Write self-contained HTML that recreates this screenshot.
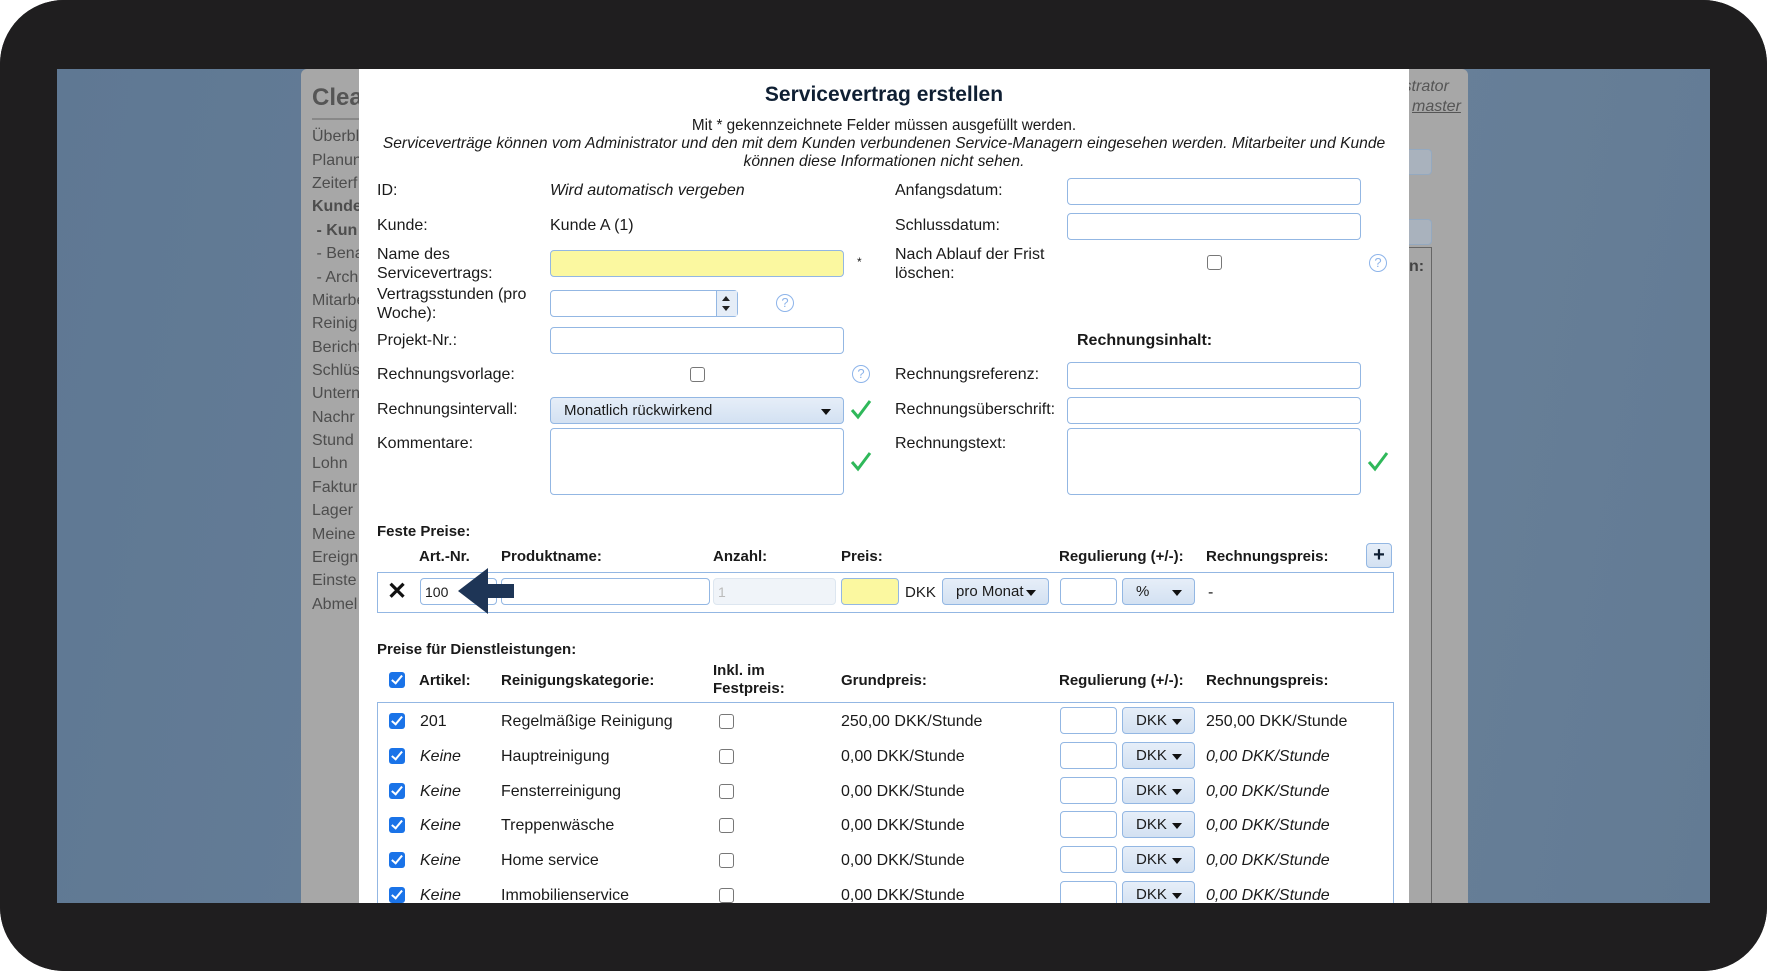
<!DOCTYPE html>
<html><head><meta charset="utf-8"><style>
*{box-sizing:border-box;margin:0;padding:0}
body{width:1767px;height:971px;background:#fff;position:relative;overflow:hidden;font-family:"Liberation Sans",Arial,sans-serif;color:#1a1a1a}
.frame{position:absolute;left:0;top:0;width:1767px;height:971px;border-radius:64px;background:#1f1e1f}
.bg{position:absolute;left:57px;top:69px;width:1653px;height:834px;background:linear-gradient(100deg,#5f7893 0%,#6a829b 60%,#637b94 100%);overflow:hidden}
.gray{position:absolute;left:301px;top:69px;width:1167px;height:834px;background:#a7a7a7;border-radius:6px 6px 0 0}
.side{position:absolute;left:312px;font-size:16px;color:#4d4d4d;white-space:nowrap}
.modal{position:absolute;left:359px;top:69px;width:1050px;height:834px;background:#fff;overflow:hidden}
.a{position:absolute;white-space:nowrap;font-size:16px}
.in{position:absolute;border:1px solid #93b7e3;border-radius:4px;background:#fff;height:27px}
.y{background:#fbf8a0}
.sel{position:absolute;border:1px solid #93b7e3;border-radius:4px;background:linear-gradient(#e6eef8,#d3e1f2);height:27px;font-size:15px;padding:4px 0 0 13px;white-space:nowrap}
.sel:after{content:"";position:absolute;right:12px;top:11px;border-left:5px solid transparent;border-right:5px solid transparent;border-top:6px solid #111}
.cb{position:absolute;width:15px;height:15px;border:1.5px solid #777;border-radius:3px;background:#fff}
.cbc{position:absolute;width:16px;height:16px;border-radius:3px;background:#1a73e8}
.cbc:after{content:"";position:absolute;left:5px;top:1px;width:4px;height:9px;border:solid #fff;border-width:0 2.5px 2.5px 0;transform:rotate(40deg)}
.q{position:absolute;width:18px;height:18px;border:1.5px solid #8db4ea;border-radius:50%;color:#8db4ea;font-size:13px;text-align:center;line-height:15px}
.ck{position:absolute;width:22px;height:22px}
.b{font-weight:bold}
.i{font-style:italic}
.t{position:absolute;left:0;top:1px}
</style></head><body>
<div class="frame"></div>
<div class="bg"></div>
<div class="gray"></div>
<div class="side" style="top:84px;font-size:24px;font-weight:bold;color:#555">Clea</div>
<div style="position:absolute;left:312px;top:118px;width:50px;border-top:2px solid #888"></div>
<div class="side" style="top:128px">Überbl</div>
<div class="side" style="top:152px">Planun</div>
<div class="side" style="top:175px">Zeiterf</div>
<div class="side b" style="top:198px">Kunde</div>
<div class="side b" style="top:222px">&nbsp;- Kun</div>
<div class="side" style="top:245px">&nbsp;- Bena</div>
<div class="side" style="top:269px">&nbsp;- Archi</div>
<div class="side" style="top:292px">Mitarbe</div>
<div class="side" style="top:315px">Reinig</div>
<div class="side" style="top:339px">Bericht</div>
<div class="side" style="top:362px">Schlüs</div>
<div class="side" style="top:385px">Untern</div>
<div class="side" style="top:409px">Nachr</div>
<div class="side" style="top:432px">Stund</div>
<div class="side" style="top:455px">Lohn</div>
<div class="side" style="top:479px">Faktur</div>
<div class="side" style="top:502px">Lager</div>
<div class="side" style="top:526px">Meine</div>
<div class="side" style="top:549px">Ereign</div>
<div class="side" style="top:572px">Einste</div>
<div class="side" style="top:596px">Abmel</div>
<div class="side i" style="left:1400px;top:78px;color:#555">istrator</div>
<div class="side i" style="left:1412px;top:98px;color:#555;text-decoration:underline">master</div>
<div style="position:absolute;left:1400px;top:149px;width:32px;height:26px;border:1px solid #94a9c0;border-radius:4px;background:#a9b2bd"></div>
<div style="position:absolute;left:1400px;top:219px;width:32px;height:26px;border:1px solid #94a9c0;border-radius:4px;background:#a9b2bd"></div>
<div style="position:absolute;left:1405px;top:247px;width:27px;height:656px;border:1px solid #666;border-left:none;border-bottom:none"></div>
<div class="side b" style="left:1409px;top:258px;color:#444">n:</div>

<div class="modal"></div>

<div class="a b" style="left:359px;width:1050px;text-align:center;top:83px;font-size:21px;color:#0f1f33">Servicevertrag erstellen</div>
<div class="a" style="left:359px;width:1050px;text-align:center;top:117px;font-size:15.3px">Mit * gekennzeichnete Felder müssen ausgefüllt werden.</div>
<div class="a i" style="left:359px;width:1050px;text-align:center;top:135px;font-size:15.6px;white-space:normal;line-height:18px;padding:0 6px">Serviceverträge können vom Administrator und den mit dem Kunden verbundenen Service-Managern eingesehen werden. Mitarbeiter und Kunde können diese Informationen nicht sehen.</div>

<div class="t">
<div class="a" style="left:377px;top:181px">ID:</div>
<div class="a i" style="left:550px;top:181px">Wird automatisch vergeben</div>
<div class="a" style="left:377px;top:216px">Kunde:</div>
<div class="a" style="left:550px;top:216px">Kunde A (1)</div>
<div class="a" style="left:377px;top:244px;line-height:19px">Name des<br>Servicevertrags:</div>
<div class="a" style="left:857px;top:254px;font-size:12px">*</div>
<div class="a" style="left:377px;top:284px;line-height:19px">Vertragsstunden (pro<br>Woche):</div>
<div class="a" style="left:377px;top:331px">Projekt-Nr.:</div>
<div class="a" style="left:377px;top:365px">Rechnungsvorlage:</div>
<div class="a" style="left:377px;top:400px">Rechnungsintervall:</div>
<div class="a" style="left:377px;top:434px">Kommentare:</div>
<div class="a" style="left:895px;top:181px">Anfangsdatum:</div>
<div class="a" style="left:895px;top:216px">Schlussdatum:</div>
<div class="a" style="left:895px;top:244px;line-height:19px">Nach Ablauf der Frist<br>löschen:</div>
<div class="a b" style="left:1077px;top:331px">Rechnungsinhalt:</div>
<div class="a" style="left:895px;top:365px">Rechnungsreferenz:</div>
<div class="a" style="left:895px;top:400px">Rechnungsüberschrift:</div>
<div class="a" style="left:895px;top:434px">Rechnungstext:</div>
<div class="a b" style="left:377px;top:522px;font-size:15px">Feste Preise:</div>
<div class="a b" style="left:419px;top:547px;font-size:15px">Art.-Nr.</div>
<div class="a b" style="left:501px;top:547px;font-size:15px">Produktname:</div>
<div class="a b" style="left:713px;top:547px;font-size:15px">Anzahl:</div>
<div class="a b" style="left:841px;top:547px;font-size:15px">Preis:</div>
<div class="a b" style="left:1059px;top:547px;font-size:15px">Regulierung (+/-):</div>
<div class="a b" style="left:1206px;top:547px;font-size:15px">Rechnungspreis:</div>
<div class="a b" style="left:377px;top:640px;font-size:15px">Preise für Dienstleistungen:</div>
<div class="a b" style="left:419px;top:671px;font-size:15px">Artikel:</div>
<div class="a b" style="left:501px;top:671px;font-size:15px">Reinigungskategorie:</div>
<div class="a b" style="left:713px;top:661px;font-size:15px;line-height:18px">Inkl. im<br>Festpreis:</div>
<div class="a b" style="left:841px;top:671px;font-size:15px">Grundpreis:</div>
<div class="a b" style="left:1059px;top:671px;font-size:15px">Regulierung (+/-):</div>
<div class="a b" style="left:1206px;top:671px;font-size:15px">Rechnungspreis:</div>
</div>

<div class="in y" style="left:550px;top:250px;width:294px"></div>
<div class="in" style="left:550px;top:290px;width:188px"></div>
<div style="position:absolute;left:716px;top:291px;width:21px;height:25px;border-left:1px solid #93b7e3;background:#e5edf7"></div>
<div style="position:absolute;left:722px;top:296px;border-left:4px solid transparent;border-right:4px solid transparent;border-bottom:5px solid #222"></div>
<div style="position:absolute;left:722px;top:306px;border-left:4px solid transparent;border-right:4px solid transparent;border-top:5px solid #222"></div>
<div class="q" style="left:776px;top:294px">?</div>
<div class="in" style="left:550px;top:327px;width:294px"></div>
<div class="cb" style="left:690px;top:367px"></div>
<div class="q" style="left:852px;top:365px">?</div>
<div class="sel" style="left:550px;top:397px;width:294px">Monatlich rückwirkend</div>
<div class="in" style="left:550px;top:428px;width:294px;height:67px"></div>
<div class="in" style="left:1067px;top:178px;width:294px"></div>
<div class="in" style="left:1067px;top:213px;width:294px"></div>
<div class="cb" style="left:1207px;top:255px"></div>
<div class="q" style="left:1369px;top:254px">?</div>
<div class="in" style="left:1067px;top:362px;width:294px"></div>
<div class="in" style="left:1067px;top:397px;width:294px"></div>
<div class="in" style="left:1067px;top:428px;width:294px;height:67px"></div>

<svg class="ck" style="left:850px;top:398px" viewBox="0 0 22 22"><path d="M2 12 L8 19 L20 3" fill="none" stroke="#2fb85a" stroke-width="3"/></svg>
<svg class="ck" style="left:850px;top:450px" viewBox="0 0 22 22"><path d="M2 12 L8 19 L20 3" fill="none" stroke="#2fb85a" stroke-width="3"/></svg>
<svg class="ck" style="left:1367px;top:450px" viewBox="0 0 22 22"><path d="M2 12 L8 19 L20 3" fill="none" stroke="#2fb85a" stroke-width="3"/></svg>

<div style="position:absolute;left:1366px;top:543px;width:26px;height:25px;border:1px solid #93b7e3;border-radius:4px;background:linear-gradient(#e6eef8,#d3e1f2);font-size:20px;font-weight:bold;text-align:center;line-height:22px;color:#0f1f33">+</div>
<div style="position:absolute;left:377px;top:572px;width:1017px;height:41px;border:1px solid #93b7e3"></div>
<div class="a b" style="left:387px;top:577px;font-size:24px;color:#111">✕</div>
<div class="in" style="left:420px;top:578px;width:77px;font-size:14px;padding:5px 4px">100</div>
<div class="in" style="left:501px;top:578px;width:209px"></div>
<div class="in" style="left:713px;top:578px;width:123px;background:#f0f4f9;border-color:#dde6f0;font-size:14px;color:#bbb;padding:5px 4px">1</div>
<div class="in y" style="left:841px;top:578px;width:58px"></div>
<div class="a" style="left:905px;top:584px;font-size:15px">DKK</div>
<div class="sel" style="left:942px;top:578px;width:107px">pro Monat</div>
<div class="in" style="left:1060px;top:578px;width:57px"></div>
<div class="sel" style="left:1122px;top:578px;width:73px">%</div>
<div class="a" style="left:1208px;top:584px">-</div>
<svg style="position:absolute;left:455px;top:566px" width="62" height="50" viewBox="0 0 62 50"><path d="M3 25 L33 2 L33 18 L59 18 L59 32 L33 32 L33 48 Z" fill="#1e3556"/></svg>

<div class="cbc" style="left:389px;top:672px"></div>
<div style="position:absolute;left:377px;top:702px;width:1017px;height:260px;border:1px solid #93b7e3"></div>

<div style="position:absolute;left:0;top:712px">
<div class="cbc" style="left:389px;top:1px"></div><div class="a" style="left:420px;top:1px">201</div><div class="a" style="left:501px;top:1px">Regelmäßige Reinigung</div><div class="cb" style="left:719px;top:2px"></div><div class="a" style="left:841px;top:1px">250,00 DKK/Stunde</div><div class="in" style="left:1060px;top:-5px;width:57px"></div><div class="sel" style="left:1122px;top:-5px;width:73px">DKK</div><div class="a" style="left:1206px;top:1px">250,00 DKK/Stunde</div>
</div>
<div style="position:absolute;left:0;top:747px">
<div class="cbc" style="left:389px;top:1px"></div><div class="a i" style="left:420px;top:1px">Keine</div><div class="a" style="left:501px;top:1px">Hauptreinigung</div><div class="cb" style="left:719px;top:2px"></div><div class="a" style="left:841px;top:1px">0,00 DKK/Stunde</div><div class="in" style="left:1060px;top:-5px;width:57px"></div><div class="sel" style="left:1122px;top:-5px;width:73px">DKK</div><div class="a i" style="left:1206px;top:1px">0,00 DKK/Stunde</div>
</div>
<div style="position:absolute;left:0;top:782px">
<div class="cbc" style="left:389px;top:1px"></div><div class="a i" style="left:420px;top:1px">Keine</div><div class="a" style="left:501px;top:1px">Fensterreinigung</div><div class="cb" style="left:719px;top:2px"></div><div class="a" style="left:841px;top:1px">0,00 DKK/Stunde</div><div class="in" style="left:1060px;top:-5px;width:57px"></div><div class="sel" style="left:1122px;top:-5px;width:73px">DKK</div><div class="a i" style="left:1206px;top:1px">0,00 DKK/Stunde</div>
</div>
<div style="position:absolute;left:0;top:816px">
<div class="cbc" style="left:389px;top:1px"></div><div class="a i" style="left:420px;top:1px">Keine</div><div class="a" style="left:501px;top:1px">Treppenwäsche</div><div class="cb" style="left:719px;top:2px"></div><div class="a" style="left:841px;top:1px">0,00 DKK/Stunde</div><div class="in" style="left:1060px;top:-5px;width:57px"></div><div class="sel" style="left:1122px;top:-5px;width:73px">DKK</div><div class="a i" style="left:1206px;top:1px">0,00 DKK/Stunde</div>
</div>
<div style="position:absolute;left:0;top:851px">
<div class="cbc" style="left:389px;top:1px"></div><div class="a i" style="left:420px;top:1px">Keine</div><div class="a" style="left:501px;top:1px">Home service</div><div class="cb" style="left:719px;top:2px"></div><div class="a" style="left:841px;top:1px">0,00 DKK/Stunde</div><div class="in" style="left:1060px;top:-5px;width:57px"></div><div class="sel" style="left:1122px;top:-5px;width:73px">DKK</div><div class="a i" style="left:1206px;top:1px">0,00 DKK/Stunde</div>
</div>
<div style="position:absolute;left:0;top:886px">
<div class="cbc" style="left:389px;top:1px"></div><div class="a i" style="left:420px;top:1px">Keine</div><div class="a" style="left:501px;top:1px">Immobilienservice</div><div class="cb" style="left:719px;top:2px"></div><div class="a" style="left:841px;top:1px">0,00 DKK/Stunde</div><div class="in" style="left:1060px;top:-5px;width:57px"></div><div class="sel" style="left:1122px;top:-5px;width:73px">DKK</div><div class="a i" style="left:1206px;top:1px">0,00 DKK/Stunde</div>
</div>
<div style="position:absolute;left:0;top:903px;width:1767px;height:68px;background:#1f1e1f;border-radius:0 0 64px 64px"></div>
<div style="position:absolute;left:0;top:0;width:1767px;height:69px;background:#1f1e1f;border-radius:64px 64px 0 0"></div>
</body></html>
